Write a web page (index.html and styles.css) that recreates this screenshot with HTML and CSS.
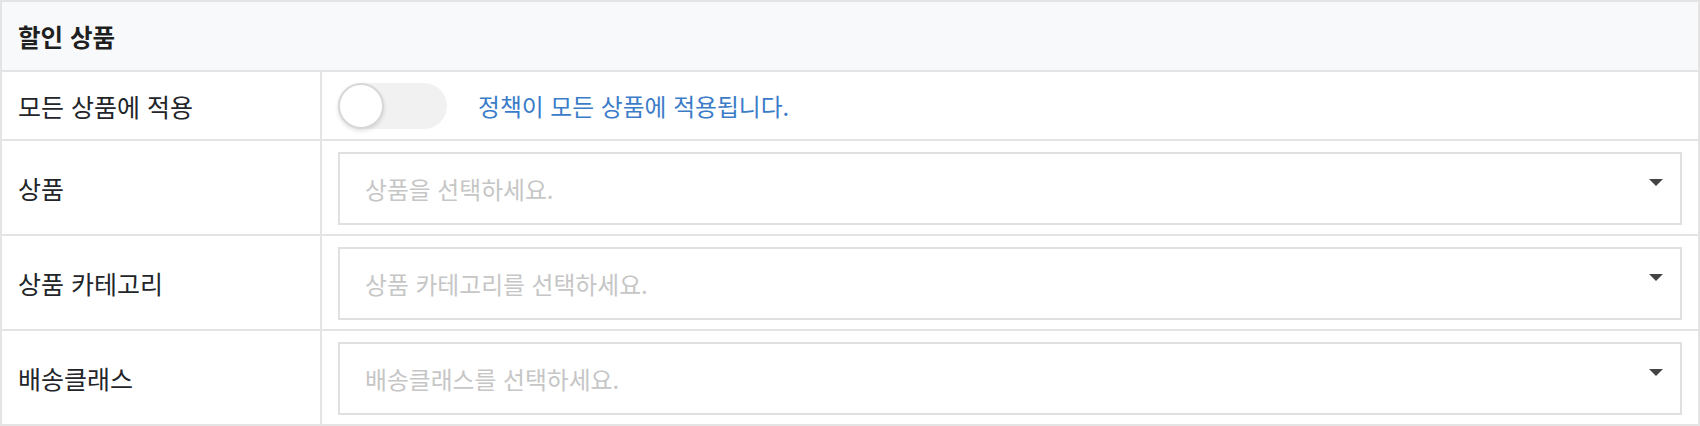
FILE: index.html
```html
<!DOCTYPE html>
<html lang="ko">
<head>
<meta charset="utf-8">
<link rel="stylesheet" href="styles.css">
</head>
<body>
<div class="panel">
  <div class="panel-head">할인 상품</div>
  <div class="row row-short">
    <div class="label">모든 상품에 적용</div>
    <div class="value">
      <span class="toggle"><span class="knob"></span></span>
      <span class="hint">정책이 모든 상품에 적용됩니다.</span>
    </div>
  </div>
  <div class="row">
    <div class="label">상품</div>
    <div class="value">
      <div class="select"><span class="placeholder">상품을 선택하세요.</span><span class="caret"></span></div>
    </div>
  </div>
  <div class="row">
    <div class="label">상품 카테고리</div>
    <div class="value">
      <div class="select"><span class="placeholder">상품 카테고리를 선택하세요.</span><span class="caret"></span></div>
    </div>
  </div>
  <div class="row">
    <div class="label">배송클래스</div>
    <div class="value">
      <div class="select"><span class="placeholder">배송클래스를 선택하세요.</span><span class="caret"></span></div>
    </div>
  </div>
</div>
</body>
</html>
```
FILE: styles.css
```css
* { box-sizing: border-box; }
html, body { margin: 0; padding: 0; background: #fff; }
body {
  font-family: "Noto Sans CJK KR", "Noto Sans", sans-serif;
  font-size: 23.8px;
  color: #222529;
}
.panel {
  width: 1700px;
  height: 426px;
  border: 2px solid #e4e4e4;
  display: flex;
  flex-direction: column;
}
.panel-head {
  height: 70px;
  background: #f8f9fa;
  border-bottom: 2px solid #e4e4e4;
  padding: 0 16px;
  display: flex;
  align-items: center;
  font-size: 24.5px;
  font-weight: 700;
  color: #1f1f1f;
}
.row {
  display: grid;
  grid-template-columns: 320px 1fr;
  height: 95px;
  border-bottom: 2px solid #e4e4e4;
}
.row:last-child { border-bottom: 0; height: 93px; }
.row-short { height: 69px; }
.label {
  border-right: 2px solid #e4e4e4;
  padding: 0 16px;
  display: flex;
  align-items: center;
  font-size: 25px;
}
.value {
  display: flex;
  align-items: center;
  padding: 0 16px 0 16px;
}
.toggle {
  position: relative;
  width: 109px;
  height: 46px;
  border-radius: 23px;
  background: #f1f1f1;
  flex: none;
}
.knob {
  position: absolute;
  left: 0;
  top: 0;
  width: 46px;
  height: 46px;
  border-radius: 50%;
  background: #fff;
  border: 2px solid #d8d8d8;
  box-shadow: 0 2px 4px rgba(0,0,0,0.12);
}
.hint {
  margin-left: 31px;
  color: #3b7cc9;
}
.select {
  position: relative;
  width: 100%;
  height: 73px;
  border: 2px solid #e0e0e0;
  display: flex;
  align-items: center;
  padding: 0 25px;
  margin-top: 1px;
}
.placeholder { color: #c6c6c6; }
.caret {
  position: absolute;
  right: 17px;
  top: 25px;
  width: 0;
  height: 0;
  border-left: 7px solid transparent;
  border-right: 7px solid transparent;
  border-top: 7px solid #444;
}
```
